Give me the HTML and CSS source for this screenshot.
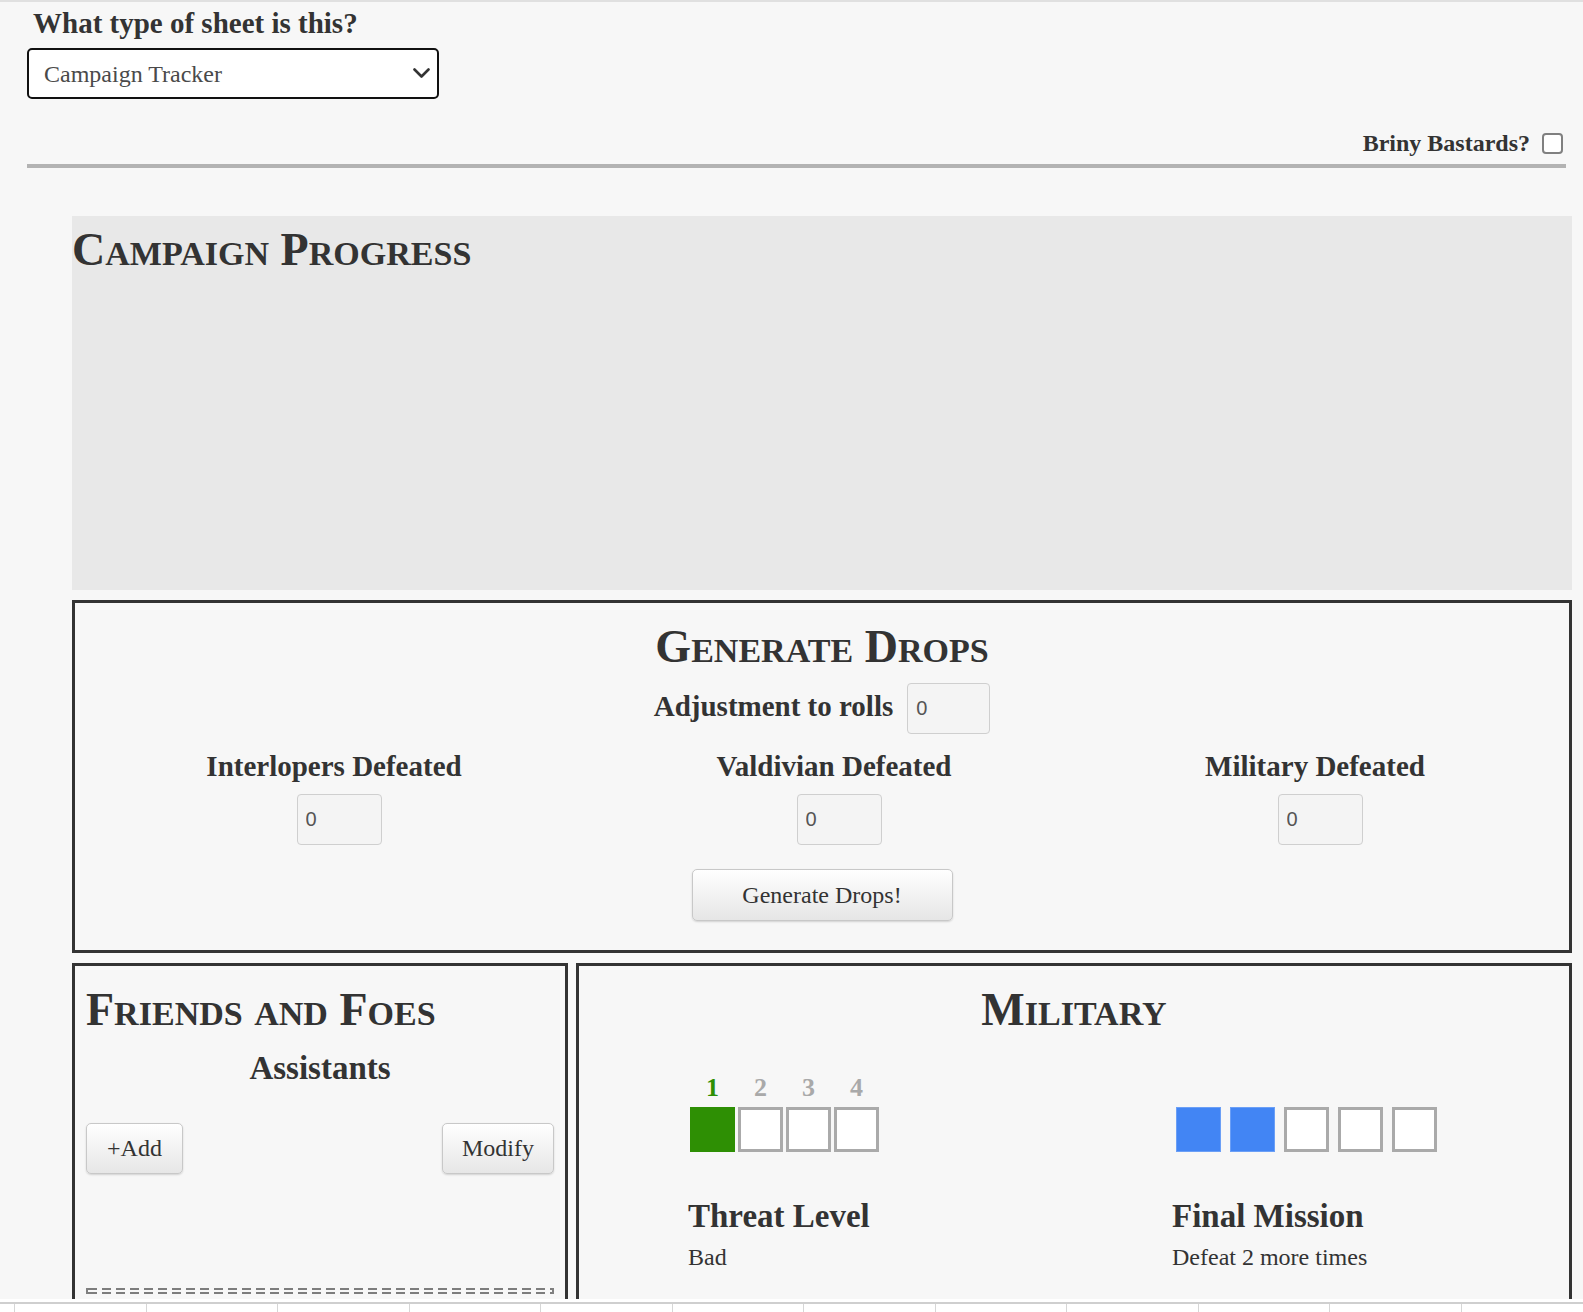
FILE: index.html
```html
<!DOCTYPE html>
<html>
<head>
<meta charset="utf-8">
<title>Campaign Tracker</title>
<link rel="stylesheet" href="styles.css">
</head>
<body>
<div class="viewport">
  <div class="header">
    <div class="type-label">What type of sheet is this?</div>
    <div class="select-wrap">
      <select class="sheet-select"><option>Campaign Tracker</option></select>
      <svg class="chev" viewBox="0 0 17 10" width="17" height="10"><path d="M1.5 1.5 L8.5 8.5 L15.5 1.5" fill="none" stroke="#333" stroke-width="2.6" stroke-linecap="round" stroke-linejoin="round"/></svg>
    </div>
    <div class="briny"><span class="briny-label">Briny Bastards?</span><input type="checkbox" class="chk"></div>
    <div class="rule"></div>
  </div>

  <div class="sheet">
    <section class="progress">
      <h2 class="title">C<span class="sc">ampaign</span> P<span class="sc">rogress</span></h2>
    </section>

    <section class="box drops">
      <h2 class="title">G<span class="sc">enerate</span> D<span class="sc">rops</span></h2>
      <div class="adj-row">
        <span class="label">Adjustment to rolls</span>
        <input class="num-input adj-input" type="text" value="0">
      </div>
      <div class="cols">
        <div class="col"><div class="label">Interlopers Defeated</div><input class="num-input col-input" type="text" value="0"></div>
        <div class="col"><div class="label">Valdivian Defeated</div><input class="num-input col-input" type="text" value="0"></div>
        <div class="col"><div class="label">Military Defeated</div><input class="num-input col-input" type="text" value="0"></div>
      </div>
      <button class="btn gen-btn">Generate Drops!</button>
    </section>

    <div class="bottom-row">
      <section class="box friends">
        <h2 class="title">F<span class="sc">riends</span> <span class="sc">and</span> F<span class="sc">oes</span></h2>
        <div class="subhead">Assistants</div>
        <div class="btn-row">
          <button class="btn add-btn">+Add</button>
          <button class="btn mod-btn">Modify</button>
        </div>
        <div class="dash"></div>
      </section>

      <section class="box military">
        <h2 class="title center">M<span class="sc">ilitary</span></h2>
        <div class="mil-cols">
          <div class="mil-col">
            <div class="nums"><span class="on">1</span><span>2</span><span>3</span><span>4</span></div>
            <div class="boxes">
              <span class="cell green"></span><span class="cell"></span><span class="cell"></span><span class="cell"></span>
            </div>
            <div class="stat-name">Threat Level</div>
            <div class="stat-desc">Bad</div>
          </div>
          <div class="mil-col">
            <div class="nums"></div>
            <div class="boxes blue-row">
              <span class="cell blue"></span><span class="cell blue"></span><span class="cell"></span><span class="cell"></span><span class="cell"></span>
            </div>
            <div class="stat-name">Final Mission</div>
            <div class="stat-desc">Defeat 2 more times</div>
          </div>
        </div>
      </section>
    </div>
  </div>
</div>
<div class="footer">
  <div class="footer-line"></div>
  <div class="footer-cells">
    <span></span><span></span><span></span><span></span><span></span><span></span>
    <span></span><span></span><span></span><span></span><span></span><span></span>
  </div>
</div>
</body>
</html>
```

FILE: styles.css
```css
html, body {
  margin: 0;
  padding: 0;
}

body {
  background: #f7f7f7;
  font-family: "Liberation Serif", "Times New Roman", serif;
  color: #333;
}

.viewport {
  height: 1299px;
  overflow: hidden;
  box-sizing: border-box;
  border-top: 2px solid #e0e0e0;
}

.header {
  padding: 4px 17px 0 27px;
}

.type-label {
  font-size: 29px;
  font-weight: bold;
  line-height: 34px;
  padding-left: 6px;
}

.select-wrap {
  position: relative;
  width: 412px;
  height: 51px;
  margin-top: 8px;
}

.sheet-select {
  -webkit-appearance: none;
  appearance: none;
  width: 100%;
  height: 100%;
  box-sizing: border-box;
  border: 2px solid #111;
  border-radius: 5px;
  background: #fff;
  font-family: "Liberation Serif", "Times New Roman", serif;
  font-size: 24px;
  color: #4a4a4a;
  padding: 0 0 0 15px;
  margin: 0;
}

.chev {
  position: absolute;
  right: 9px;
  top: 20px;
}

.briny {
  display: flex;
  justify-content: flex-end;
  align-items: flex-start;
  height: 21px;
  margin-top: 34px;
}

.briny-label {
  font-size: 24px;
  font-weight: bold;
  line-height: 21px;
}

.chk {
  -webkit-appearance: none;
  appearance: none;
  width: 21px;
  height: 21px;
  box-sizing: border-box;
  border: 2px solid #808080;
  border-radius: 4px;
  background: #fff;
  margin: 0 3px 0 12px;
}

.rule {
  height: 4px;
  background: #b3b3b3;
  margin-top: 10px;
}

.sheet {
  margin: 48px 11px 0 72px;
}

.title {
  margin: 0;
  font-size: 46px;
  line-height: 52px;
  font-weight: bold;
  color: #333;
}

.title .sc {
  font-size: 0.74em;
  line-height: 0;
  text-transform: uppercase;
}

.title.center {
  text-align: center;
}

.progress {
  background: #e8e8e8;
  height: 374px;
  box-sizing: border-box;
  padding-top: 8px;
}

.box {
  border: 3px solid #333;
  box-sizing: border-box;
}

.drops {
  margin-top: 10px;
  padding: 18px 0 29px;
  text-align: center;
}

.label {
  font-size: 29px;
  font-weight: bold;
  line-height: 34px;
}

.adj-row {
  display: flex;
  justify-content: center;
  align-items: flex-start;
  gap: 14px;
  margin-top: 10px;
}

.adj-row .label {
  margin-top: 6px;
}

.num-input {
  display: block;
  width: 83px;
  height: 51px;
  box-sizing: border-box;
  border: 1px solid #cfcfcf;
  border-radius: 4px;
  background: #f4f4f4;
  font-family: "Liberation Sans", Arial, sans-serif;
  font-size: 20px;
  color: #555;
  padding: 0 8px;
  margin: 0;
}

.cols {
  display: grid;
  grid-template-columns: 518px 482px 1fr;
  padding-right: 14px;
  margin-top: 15px;
}

.col {
  display: flex;
  flex-direction: column;
  align-items: center;
}

.col-input {
  width: 85px;
  margin: 11px 0 0 10px;
}

.btn {
  border: 1px solid #c8c8c8;
  border-radius: 5px;
  background: linear-gradient(#ffffff, #e6e6e6);
  box-shadow: 0 1px 2px rgba(0, 0, 0, 0.15);
  font-family: "Liberation Serif", "Times New Roman", serif;
  font-size: 24px;
  color: #333;
  padding: 0;
  margin: 0;
}

.gen-btn {
  width: 261px;
  height: 52px;
  margin-top: 24px;
}

.bottom-row {
  display: flex;
  align-items: flex-start;
  gap: 8px;
  margin-top: 10px;
}

.friends {
  width: 496px;
  flex: none;
  height: 420px;
  padding: 18px 11px 0;
}

.subhead {
  font-size: 33px;
  font-weight: bold;
  line-height: 38px;
  text-align: center;
  margin-top: 13px;
}

.btn-row {
  display: flex;
  justify-content: space-between;
  margin-top: 36px;
}

.add-btn {
  width: 97px;
  height: 51px;
}

.mod-btn {
  width: 112px;
  height: 51px;
}

.dash {
  height: 6px;
  margin-top: 114px;
  border-left: 2px solid #808080;
  border-right: 2px solid #808080;
  background:
    linear-gradient(#f7f7f7, #f7f7f7) center / 100% 2px no-repeat,
    repeating-linear-gradient(90deg, #7d7d7d 0 9px, transparent 9px 14px);
}

.military {
  flex: 1;
  height: 420px;
  padding-top: 18px;
}

.mil-cols {
  display: grid;
  grid-template-columns: 484px 1fr;
  padding-left: 109px;
  margin-top: 39px;
}

.nums {
  display: flex;
  gap: 3px;
  height: 26px;
  font-size: 26px;
  font-weight: bold;
  line-height: 26px;
  margin-left: 2px;
}

.nums span {
  width: 45px;
  text-align: center;
  color: #a9a9a9;
}

.nums span.on {
  color: #2e8f04;
}

.boxes {
  display: flex;
  gap: 3px;
  margin: 6px 0 0 2px;
}

.boxes.blue-row {
  gap: 9px;
  margin-left: 4px;
}

.cell {
  width: 45px;
  height: 45px;
  box-sizing: border-box;
  border: 3px solid #aaa;
  background: #fff;
}

.cell.green {
  background: #2e8f04;
  border-color: #2e8f04;
}

.cell.blue {
  background: #4285f4;
  border: 1px solid #6b9ff6;
}

.stat-name {
  font-size: 33px;
  font-weight: bold;
  line-height: 38px;
  margin-top: 45px;
}

.stat-desc {
  font-size: 24px;
  line-height: 28px;
  margin-top: 8px;
}

.footer {
  height: 13px;
  box-sizing: border-box;
  background: #fff;
  padding-top: 3px;
  overflow: hidden;
}

.footer-line {
  height: 2px;
  background: #cfcfcf;
}

.footer-cells {
  display: flex;
  height: 8px;
  padding-left: 14px;
}

.footer-cells span {
  flex: none;
  width: 131.5px;
  box-sizing: border-box;
  border-left: 1px solid #d6d6d6;
}
```
